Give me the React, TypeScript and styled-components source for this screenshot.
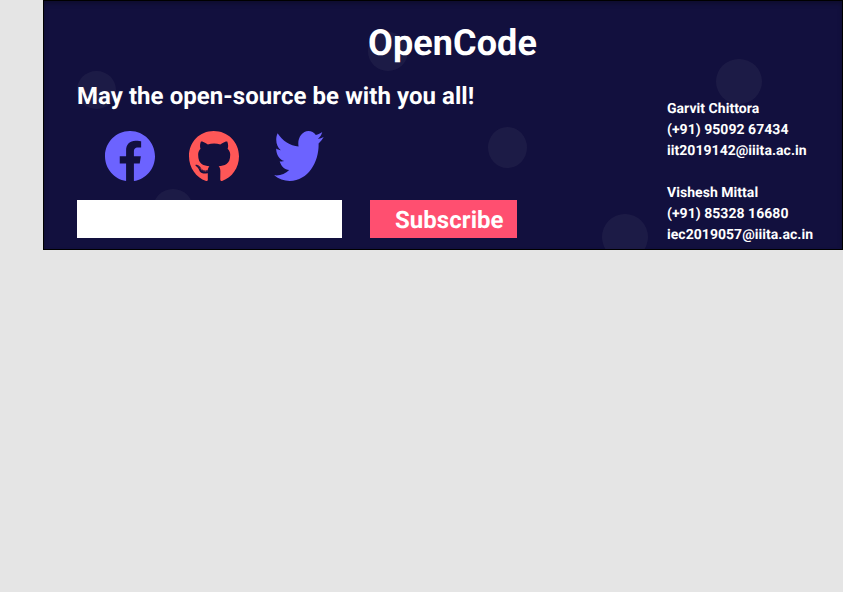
import React from "react";
import styled, { createGlobalStyle } from "styled-components";
import { FaGithub, FaTwitter } from "react-icons/fa";
import { BsFacebook } from "react-icons/bs";

const GlobalStyle = createGlobalStyle`
  * { box-sizing: border-box; }
  body {
    margin: 0;
    background: #e5e5e5;
    font-family: Roboto, "Liberation Sans", sans-serif;
    font-weight: 700;
    text-rendering: geometricPrecision;
    color: #fff;
  }
`;

const Footer = styled.footer`
  position: relative;
  overflow: hidden;
  width: 800px;
  height: 250px;
  margin-left: 43px;
  padding: 21px 0 0 33px;
  border: 1px solid #000;
  background: #12103e;
  box-shadow: inset 0 3px 4px rgba(0, 0, 0, 0.25);
`;

/* Decorative bubble floating behind the footer content. */
const Bubble = styled.span<{ $x: number; $y: number; $w: number; $h: number }>`
  position: absolute;
  left: ${(p) => p.$x}px;
  top: ${(p) => p.$y}px;
  width: ${(p) => p.$w}px;
  height: ${(p) => p.$h}px;
  border-radius: 50%;
  background: rgba(196, 196, 196, 0.06);
`;

const Content = styled.div`
  position: relative;
`;

const Title = styled.h1`
  margin: 0;
  padding-left: 291px;
  font-size: 36px;
  line-height: 42px;
  letter-spacing: 0.08px;
`;

const Columns = styled.div`
  display: flex;
`;

const Main = styled.div`
  width: 590px;
  padding-top: 18px;
`;

const Tagline = styled.p`
  margin: 0;
  font-size: 24px;
  line-height: 28px;
  letter-spacing: 0.055px;
`;

const Socials = styled.nav`
  display: flex;
  gap: 34px;
  margin-top: 21px;
  padding-left: 28px;
`;

const SocialLink = styled.a<{ $color: string }>`
  display: flex;
  width: 50px;
  height: 50px;
  color: ${(p) => p.$color};

  svg {
    width: 100%;
    height: 100%;
  }
`;

const SubscribeForm = styled.form`
  display: flex;
  gap: 28px;
  margin-top: 19px;
`;

const EmailInput = styled.input`
  width: 265px;
  height: 38px;
  padding: 0 12px;
  border: 0;
  border-radius: 0;
  background: #fff;
  font: inherit;
`;

const SubscribeButton = styled.button`
  width: 147px;
  height: 38px;
  padding: 2px 0 0 25px;
  border: 0;
  background: #ff4f70;
  color: #fff;
  font: 700 24px/28px Roboto, "Liberation Sans", sans-serif;
  letter-spacing: 0.05px;
  text-align: left;
  text-rendering: inherit;
`;

const Contacts = styled.div`
  display: flex;
  flex-direction: column;
  gap: 21px;
  padding-top: 35px;
`;

const Contact = styled.address`
  font-size: 14px;
  font-style: normal;
  line-height: 21px;
  letter-spacing: 0.04px;
  white-space: nowrap;
`;

const bubbles = [
  { x: 33, y: 70, w: 39, h: 38 },
  { x: 324, y: 31, w: 40, h: 39 },
  { x: 444, y: 126, w: 39, h: 41 },
  { x: 672, y: 58, w: 46, h: 45 },
  { x: 558, y: 213, w: 46, h: 46 },
  { x: 109, y: 188, w: 40, h: 40 },
];

const contacts = [
  { name: "Garvit Chittora", phone: "(+91) 95092 67434", email: "iit2019142@iiita.ac.in" },
  { name: "Vishesh Mittal", phone: "(+91) 85328 16680", email: "iec2019057@iiita.ac.in" },
];

export default function App() {
  return (
    <>
      <GlobalStyle />
      <Footer>
        {bubbles.map((b) => (
          <Bubble key={b.x} $x={b.x} $y={b.y} $w={b.w} $h={b.h} />
        ))}
        <Content>
          <Title>OpenCode</Title>
          <Columns>
            <Main>
              <Tagline>May the open-source be with you all!</Tagline>
              <Socials>
                <SocialLink $color="#6c63ff" aria-label="Facebook">
                  <BsFacebook />
                </SocialLink>
                <SocialLink $color="#ff5757" aria-label="GitHub">
                  <FaGithub viewBox="0 8 496 484" preserveAspectRatio="none" />
                </SocialLink>
                <SocialLink $color="#6c63ff" aria-label="Twitter">
                  <FaTwitter viewBox="-12 48 517 416" preserveAspectRatio="none" overflow="visible" />
                </SocialLink>
              </Socials>
              <SubscribeForm>
                <EmailInput type="email" aria-label="Email" />
                <SubscribeButton type="button">Subscribe</SubscribeButton>
              </SubscribeForm>
            </Main>
            <Contacts>
              {contacts.map((c) => (
                <Contact key={c.email}>
                  <div>{c.name}</div>
                  <div>{c.phone}</div>
                  <div>{c.email}</div>
                </Contact>
              ))}
            </Contacts>
          </Columns>
        </Content>
      </Footer>
    </>
  );
}
